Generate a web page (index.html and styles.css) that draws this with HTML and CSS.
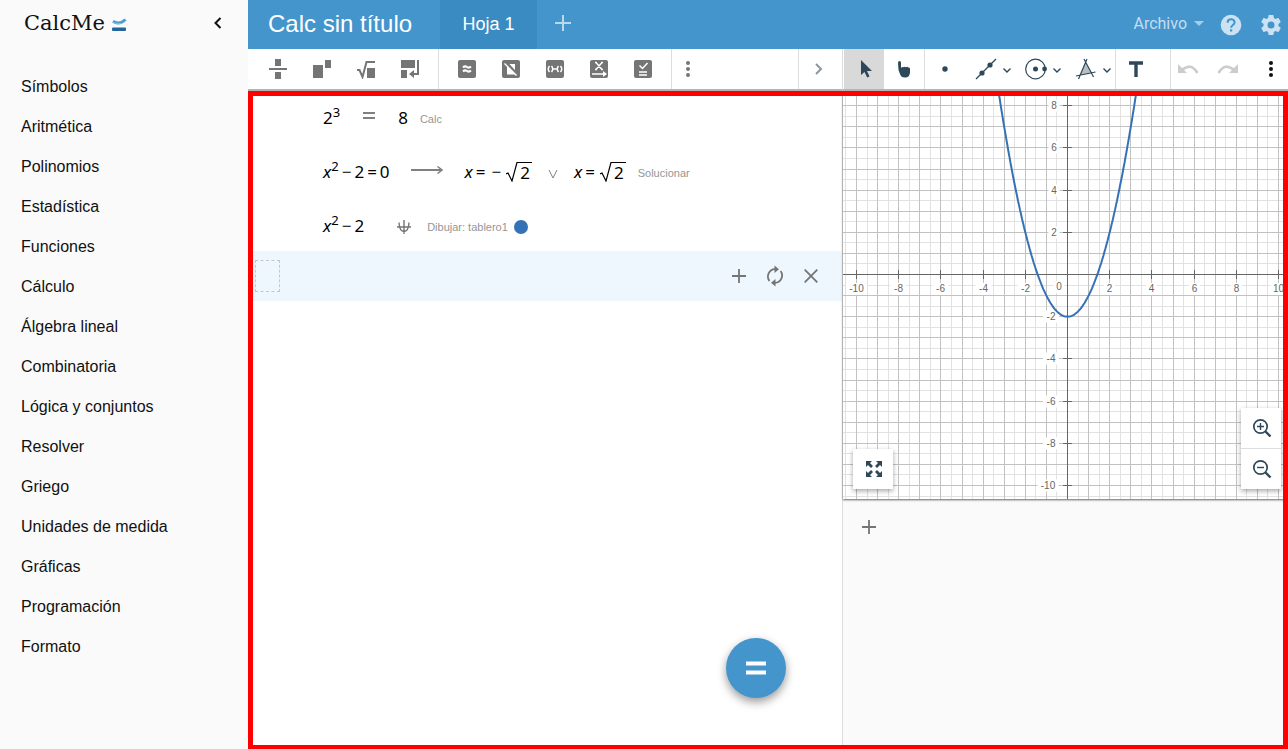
FILE: index.html
```html
<!DOCTYPE html>
<html lang="es">
<head>
<meta charset="utf-8">
<title>CalcMe</title>
<link rel="stylesheet" href="styles.css">
</head>
<body>
<div class="app">
  <aside class="sidebar">
    <div class="brand">
      <span class="brand-name">CalcMe</span>
      <svg class="brand-mark" width="15" height="14" viewBox="0 0 15 14"><path d="M1 3.200Q7 7.500 13.500 1.500" fill="none" stroke="#4a9fd4" stroke-width="3"/><path d="M1 4.500Q5 6.500 9 5.500" fill="none" stroke="#7fc0e4" stroke-width="1"/><rect x="0" y="9.500" width="14" height="3.500" rx="1" fill="#22659c"/></svg>
      <button class="collapse" aria-label="Contraer"><svg width="10" height="12" viewBox="0 0 10 12"><path d="M7.500 1L2.500 6l5 5" fill="none" stroke="#111" stroke-width="2"/></svg></button>
    </div>
    <nav class="menu">
      <a href="#">Símbolos</a><a href="#">Aritmética</a><a href="#">Polinomios</a><a href="#">Estadística</a><a href="#">Funciones</a><a href="#">Cálculo</a><a href="#">Álgebra lineal</a><a href="#">Combinatoria</a><a href="#">Lógica y conjuntos</a><a href="#">Resolver</a><a href="#">Griego</a><a href="#">Unidades de medida</a><a href="#">Gráficas</a><a href="#">Programación</a><a href="#">Formato</a>
    </nav>
  </aside>

  <main class="main">
    <header class="header">
      <h1 class="title">Calc sin título</h1>
      <button class="tab">Hoja 1</button>
      <button class="add-tab" aria-label="Nueva hoja"><svg width="16" height="16" viewBox="0 0 16 16"><path d="M8 0v16M0 8h16" stroke="#b9d9ef" stroke-width="2"/></svg></button>
      <span class="spacer"></span>
      <button class="file-menu">Archivo <span class="caret"></span></button>
      <button class="head-icon" aria-label="Ayuda"><svg width="22" height="22" viewBox="0 0 22 22"><circle cx="11" cy="11" r="10.300" fill="#cbe2f2"/><path d="M7.600 8.700c0-4.600 7-4.300 7-.300 0 2.500-3.500 2.800-3.500 5.400" fill="none" stroke="#4595cd" stroke-width="2"/><rect x="10" y="15.300" width="2.200" height="2.200" fill="#4595cd"/></svg></button>
      <button class="head-icon" aria-label="Ajustes"><svg width="24" height="24" viewBox="0 0 24 24"><path fill="#cbe2f2" d="M19.430 12.980c.04-.32.07-.64.07-.98s-.03-.66-.07-.98l2.110-1.650c.19-.15.24-.42.12-.64l-2-3.460c-.12-.22-.39-.3-.61-.22l-2.490 1c-.52-.4-1.080-.73-1.690-.98l-.38-2.650C14.460 2.180 14.250 2 14 2h-4c-.25 0-.46.18-.49.42l-.38 2.650c-.61.25-1.170.59-1.690.98l-2.490-1c-.23-.09-.49 0-.61.22l-2 3.460c-.13.22-.07.49.12.64l2.110 1.650c-.04.32-.07.65-.07.98s.03.66.07.98l-2.110 1.650c-.19.15-.24.42-.12.64l2 3.460c.12.22.39.3.61.22l2.490-1c.52.4 1.080.73 1.690.98l.38 2.650c.03.24.24.42.49.42h4c.25 0 .46-.18.49-.42l.38-2.650c.61-.25 1.170-.59 1.690-.98l2.490 1c.23.09.49 0 .61-.22l2-3.460c.12-.22.07-.49-.12-.64l-2.110-1.650zM12 15.500a3.500 3.500 0 1 1 0-7 3.500 3.500 0 0 1 0 7z"/></svg></button>
    </header>

    <div class="work">
      <section class="sheet">
        <div class="toolbar">
          <div class="group first">
            <button class="tool" aria-label="Fracción"><svg width="18" height="20" viewBox="0 0 18 20"><path d="M6 0h6v7H6zM0 9h18v2H0zM6 13h6v7H6z" fill="#757575"/></svg></button>
            <button class="tool" aria-label="Potencia"><svg width="20" height="20" viewBox="0 0 20 20"><path d="M1 6h10v13H1zM13 1h6v8h-6z" fill="#757575"/></svg></button>
            <button class="tool" aria-label="Raíz"><svg width="20" height="20" viewBox="0 0 20 20"><path d="M11 9h8v10h-8z" fill="#757575"/><path d="M1 11h2.500l3 7L10.500 3H19" fill="none" stroke="#757575" stroke-width="2"/></svg></button>
            <button class="tool" aria-label="Salto"><svg width="20" height="20" viewBox="0 0 20 20"><path d="M1 1h14v8H1zM1 11h6v8H1z" fill="#757575"/><path d="M18 1v14h-7" fill="none" stroke="#757575" stroke-width="2"/><path d="M9 15l5-4v8z" fill="#757575"/></svg></button>
          </div>
          <div class="group">
            <button class="tool" aria-label="Aproximar"><svg width="18" height="18" viewBox="0 0 18 18"><rect width="18" height="18" rx="2" fill="#757575"/><path d="M5 7.500q2-2 4-.500t4-.500M5 11.500q2-2 4-.500t4-.500" fill="none" stroke="#fff" stroke-width="2"/></svg></button>
            <button class="tool" aria-label="Sin evaluar"><svg width="18" height="18" viewBox="0 0 18 18"><rect width="18" height="18" rx="2" fill="#757575"/><path d="M7 4h6v10.500H5V6z" fill="#fff"/><path d="M4 2.500l11 12" stroke="#757575" stroke-width="3"/><path d="M2.500 3.500l12 12" stroke="#fff" stroke-width="1.500"/></svg></button>
            <button class="tool" aria-label="Factorizar"><svg width="18" height="18" viewBox="0 0 18 18"><rect width="18" height="18" rx="2" fill="#757575"/><path d="M3.500 6Q1 9 3.500 12M5.500 6Q8 9 5.500 12M12.500 6Q10 9 12.500 12M14.500 6Q17 9 14.500 12M7.500 9h3" fill="none" stroke="#fff" stroke-width="1.500"/></svg></button>
            <button class="tool" aria-label="Resolver"><svg width="18" height="18" viewBox="0 0 18 18"><rect width="18" height="18" rx="2" fill="#757575"/><path d="M6 2.500l6 7M12 2.500l-6 7M5 2.500h2M11 2.500h2M5 9.500h2M11 9.500h2M2 14h12" stroke="#fff" stroke-width="1.500"/><path d="M13 11l4 3-4 3z" fill="#fff"/></svg></button>
            <button class="tool" aria-label="Comprobar"><svg width="18" height="18" viewBox="0 0 18 18"><rect width="18" height="18" rx="2" fill="#757575"/><path d="M5.500 5.500l3 3L13.500 3M5 12h8M5 15h8" fill="none" stroke="#fff" stroke-width="1.500"/></svg></button>
          </div>
          <button class="tool narrow" aria-label="Más"><svg width="6" height="18" viewBox="0 0 6 18"><g fill="#757575"><circle cx="3" cy="3" r="2"/><circle cx="3" cy="9" r="2"/><circle cx="3" cy="15" r="2"/></g></svg></button>
          <span class="spacer"></span>
          <button class="tool next" aria-label="Siguiente"><svg width="10" height="14" viewBox="0 0 10 14"><path d="M2 2l5 5-5 5" fill="none" stroke="#8d979e" stroke-width="2"/></svg></button>
        </div>

        <div class="lines">
          <div class="line">
            <span class="math">2<sup>3</sup></span>
            <svg class="op-eq" width="12" height="8" viewBox="0 0 12 8"><path d="M0 1h12M0 6h12" stroke="#808080" stroke-width="2"/></svg>
            <span class="math">8</span>
            <span class="note">Calc</span>
          </div>
          <div class="line">
            <span class="math"><i>x</i><sup>2</sup><span class="bin">−</span>2<span class="bin">=</span>0</span>
            <svg class="arrow" width="32" height="8" viewBox="0 0 32 8"><path d="M0 4h31" stroke="#808080" stroke-width="2"/><path d="M26.500 .500L31 4l-4.500 3.500" fill="none" stroke="#808080" stroke-width="1.500"/></svg>
            <span class="math"><i>x</i><span class="bin">=</span><span class="bin">−</span><svg class="root" width="12" height="20" viewBox="0 0 12 20"><path d="M0 12l2-1 4 8L11 .500h1" fill="none" stroke="#000" stroke-width="1.200"/></svg><span class="radicand">2</span></span>
            <svg class="or" width="10" height="10" viewBox="0 0 10 10"><path d="M1 1l4 8 4-8" fill="none" stroke="#808080"/></svg>
            <span class="math"><i>x</i><span class="bin">=</span><svg class="root" width="12" height="20" viewBox="0 0 12 20"><path d="M0 12l2-1 4 8L11 .500h1" fill="none" stroke="#000" stroke-width="1.200"/></svg><span class="radicand">2</span></span>
            <span class="note">Solucionar</span>
          </div>
          <div class="line">
            <span class="math"><i>x</i><sup>2</sup><span class="bin">−</span>2</span>
            <svg class="plot-op" width="16" height="16" viewBox="0 0 16 16"><path d="M1 8h14M8 1v14M3 3.500Q3.500 12.500 8 12.500T13 3.500" fill="none" stroke="#757575" stroke-width="1.400"/></svg>
            <span class="note">Dibujar: tablero1</span>
            <span class="swatch"></span>
          </div>
          <div class="active-line">
            <input class="cell" aria-label="Expresión">
            <span class="spacer"></span>
            <button class="action" aria-label="Añadir"><svg width="14" height="14" viewBox="0 0 14 14"><path d="M7 0v14M0 7h14" stroke="#757575" stroke-width="1.800"/></svg></button>
            <button class="action" aria-label="Recalcular"><svg width="20" height="22" viewBox="0 0 20 22"><path d="M4.500 16A7.300 7.300 0 0 1 10 4.200M15.500 6A7.300 7.300 0 0 1 10 17.800" fill="none" stroke="#757575" stroke-width="1.800"/><path d="M9.500 .500l4.500 3.700-4.500 3.700zM10.500 14.100L6 17.800l4.500 3.700z" fill="#757575"/></svg></button>
            <button class="action" aria-label="Cerrar"><svg width="14" height="14" viewBox="0 0 14 14"><path d="M.700.700l12.600 12.600M13.300.700L.700 13.300" stroke="#757575" stroke-width="1.800"/></svg></button>
          </div>
        </div>
        <button class="evaluate" aria-label="Calcular"><svg width="20" height="14" viewBox="0 0 20 14"><path d="M0 2.500h20M0 11.500h20" stroke="#fff" stroke-width="4"/></svg></button>
      </section>

      <section class="board">
        <div class="toolbar">
          <div class="group pick">
            <button class="tool selected" aria-label="Seleccionar"><svg width="14" height="20" viewBox="0 0 14 20"><path d="M2 1v15l3.500-3 2.700 5.500 2.300-1-2.500-5.500H13z" fill="#2d4858"/></svg></button>
            <button class="tool" aria-label="Mover"><svg width="14" height="18" viewBox="0 0 14 18"><path d="M1 3Q1 1 2.500 1T4 3v5q1-1.500 2.500-.700 1.200-1.300 2.500 0 1.500-1 2.300.300Q13 7 13 9v3q0 5.500-5 5.500-4 0-5-3.500L1.500 10z" fill="#2d4858"/></svg></button>
          </div>
          <div class="group shapes">
            <button class="tool" aria-label="Punto"><svg width="6" height="6"><circle cx="3" cy="3" r="2.700" fill="#2d4858"/></svg></button>
            <button class="tool wide" aria-label="Recta"><svg width="22" height="22" viewBox="0 0 22 22"><path d="M1 21L21 1" stroke="#2d4858" stroke-width="1.200"/><circle cx="7" cy="15" r="2.600" fill="#2d4858"/><circle cx="15" cy="7" r="2.600" fill="#2d4858"/></svg><svg class="drop" width="8" height="5" viewBox="0 0 8 5"><path d="M.500.500L4 4 7.500.500" fill="none" stroke="#2d4858" stroke-width="1.400"/></svg></button>
            <button class="tool wide" aria-label="Circunferencia"><svg width="22" height="22" viewBox="0 0 22 22"><circle cx="10.500" cy="11" r="9.800" fill="none" stroke="#2d4858" stroke-width="1.200"/><circle cx="10.500" cy="11" r="2.500" fill="#2d4858"/><circle cx="19.600" cy="11" r="2.400" fill="#2d4858"/></svg><svg class="drop" width="8" height="5" viewBox="0 0 8 5"><path d="M.500.500L4 4 7.500.500" fill="none" stroke="#2d4858" stroke-width="1.400"/></svg></button>
            <button class="tool wide" aria-label="Polígono"><svg width="22" height="22" viewBox="0 0 22 22"><path d="M10.500 4L5 17l12-2z" fill="#b7bfc4"/><path d="M12 1L3.500 21M9 1l9.500 18M1 18l19.500-4" fill="none" stroke="#2d4858" stroke-width="1.200"/></svg><svg class="drop" width="8" height="5" viewBox="0 0 8 5"><path d="M.500.500L4 4 7.500.500" fill="none" stroke="#2d4858" stroke-width="1.400"/></svg></button>
          </div>
          <button class="tool" aria-label="Texto"><svg width="14" height="16" viewBox="0 0 14 16"><path d="M0 2h14M7 2v14" stroke="#2d4858" stroke-width="3.400"/></svg></button>
          <span class="spacer"></span>
          <div class="history">
            <button aria-label="Deshacer"><svg width="24" height="20" viewBox="0 0 24 20"><path d="M2 5v9h9z" fill="#ccc"/><path d="M6 11Q15 3 21.500 14" fill="none" stroke="#ccc" stroke-width="2.500"/></svg></button>
            <button aria-label="Rehacer"><svg width="24" height="20" viewBox="0 0 24 20"><path d="M22 5v9h-9z" fill="#ccc"/><path d="M18 11Q9 3 2.500 14" fill="none" stroke="#ccc" stroke-width="2.500"/></svg></button>
            <button class="more" aria-label="Más opciones"><svg width="6" height="18" viewBox="0 0 6 18"><g fill="#111"><circle cx="3" cy="3" r="2"/><circle cx="3" cy="9" r="2"/><circle cx="3" cy="15" r="2"/></g></svg></button>
          </div>
        </div>
        <div class="plot">
          <svg id="graph" class="graph"></svg>
          <button class="float expand" aria-label="Ampliar"><svg width="16" height="16" viewBox="0 0 16 16"><path d="M0 0h6L4 2l3 3-2 2-3-3-2 2zM16 0v6l-2-2-3 3-2-2 3-3-2-2zM0 16v-6l2 2 3-3 2 2-3 3 2 2zM16 16h-6l2-2-3-3 2-2 3 3 2-2z" fill="#2d4858"/></svg></button>
          <div class="zoom">
            <button class="float" aria-label="Acercar"><svg width="20" height="20" viewBox="0 0 20 20"><circle cx="8.500" cy="8.500" r="6.700" fill="none" stroke="#2d4858" stroke-width="1.700"/><path d="M5 8.500h7M8.500 5v7" stroke="#2d4858" stroke-width="1.400"/><path d="M13.500 13.500l5 5" stroke="#2d4858" stroke-width="2.400"/></svg></button>
            <button class="float" aria-label="Alejar"><svg width="20" height="20" viewBox="0 0 20 20"><circle cx="8.500" cy="8.500" r="6.700" fill="none" stroke="#2d4858" stroke-width="1.700"/><path d="M5 8.500h7" stroke="#2d4858" stroke-width="1.400"/><path d="M13.500 13.500l5 5" stroke="#2d4858" stroke-width="2.400"/></svg></button>
          </div>
        </div>
        <div class="objects">
          <button class="action" aria-label="Añadir objeto"><svg width="14" height="14" viewBox="0 0 14 14"><path d="M7 0v14M0 7h14" stroke="#757575" stroke-width="1.800"/></svg></button>
        </div>
      </section>
      <div class="highlight"></div>
    </div>
  </main>
</div>
<script src="graph.js"></script>
</body>
</html>
```
FILE: styles.css
```css
* { box-sizing: border-box; }
body { margin: 0; font-family: "Liberation Sans", Arial, sans-serif; color: #111; }
button { border: 0; padding: 0; margin: 0; background: none; font: inherit; color: inherit; display: flex; align-items: center; justify-content: center; flex: none; }
svg { display: block; flex: none; }
.app { display: flex; height: 100vh; overflow: hidden; }
.spacer { flex: 1; }

.sidebar { width: 248px; flex: none; background: #fafafa; }
.brand { display: flex; align-items: center; height: 46px; padding: 0 23px 0 24px; }
.brand-name { font: 21px "DejaVu Serif", serif; color: #111; }
.brand-mark { margin: 4px 0 0 7px; }
.collapse { margin-left: auto; width: 14px; height: 24px; }
.menu { display: flex; flex-direction: column; padding-top: 21px; }
.menu a { padding-left: 21px; font-size: 16px; line-height: 40px; color: #111; text-decoration: none; }

.main { flex: 1; min-width: 0; display: flex; flex-direction: column; }
.header { display: flex; align-items: center; height: 49px; flex: none; background: #4595cd; color: #fff; padding-right: 6px; }
.title { margin: 0; padding: 0 28px 2px 20px; font-size: 24px; font-weight: 400; white-space: nowrap; }
.tab { align-self: stretch; width: 97px; background: #3b8bc3; font-size: 18px; }
.add-tab { width: 52px; height: 46px; align-self: flex-start; }
.file-menu { font: 16px Roboto, sans-serif; color: #c3def0; gap: 7px; margin: 0 16px 2px 0; }
.caret { border: 5px solid transparent; border-top-color: #a6cde8; border-bottom: 0; }
.head-icon { width: 22px; margin-right: 18px; }
.head-icon:last-child { margin-right: 0; }

.work { flex: 1; min-height: 0; position: relative; display: grid; grid-template-columns: 4fr 3fr; }
.sheet, .board { min-width: 0; display: flex; flex-direction: column; position: relative; }
.board { border-left: 1px solid #ddd; background: #fafafa; }
.toolbar { height: 40px; flex: none; display: flex; align-items: stretch; background: #fff; box-shadow: 0 2px 0 #b4b4b4; position: relative; z-index: 1; }
.group { display: flex; border-right: 1px solid #ddd; padding: 0 6px; }
.group.first { padding-left: 8px; }
.tool { width: 44px; }
.tool.narrow { width: 32px; }
.tool.next { border-left: 1px solid #ddd; padding-right: 3px; }
.board .group { padding: 0; }
.board .group.pick { padding-left: 1px; }
.board .tool { width: 40px; }
.board .tool.wide { width: 50px; justify-content: flex-start; padding-left: 10px; gap: 6px; }
.drop { margin-top: 3px; }
.board .tool.selected { background: #d9d9d9; padding-left: 3px; }
.history { display: flex; align-items: center; gap: 16px; border-left: 1px solid #ddd; padding: 0 5px; }
.history button { width: 24px; }
.history .more { margin-left: 3px; }

.sheet { background: #fff; }
.line { display: flex; align-items: center; height: 54px; padding: 4px 0 0 75px; }
.math { display: inline-flex; align-items: center; font: 17px/20px "Noto Sans", sans-serif; color: #000; }
.math sup { font-size: 13px; line-height: 13px; vertical-align: baseline; margin: 0 0 12px; }
.bin { margin: 0 3px; }
.note { font-size: 11px; color: #969696; margin: 2px 0 0 12px; white-space: nowrap; }
.op-eq { margin: 0 23px 4px; }
.arrow { margin: 0 22px 4px 21px; }
.root { margin-left: 2px; }
.radicand { border-top: 1px solid #000; padding: 0 2px; }
.or { margin: 4px 16px 0; }
.plot-op { margin: 2px 3px 0 32px; }
.swatch { width: 14px; height: 14px; border-radius: 50%; background: #3572b5; margin: 2px 0 0 6px; }
.active-line { display: flex; align-items: center; height: 50px; background: #eef6fe; padding: 0 13px 0 7px; }
.cell { width: 25px; height: 32px; border: 1px dashed #c4c8cc; background: none; padding: 0; }
.action { width: 36px; height: 36px; }
.evaluate { position: absolute; right: 56px; bottom: 51px; width: 60px; height: 60px; border-radius: 50%; background: #4595cd; box-shadow: 0 4px 10px rgba(0, 0, 0, .4); }

.plot { flex: 41; min-height: 0; position: relative; background: #fff; box-shadow: 0 1px 2px rgba(0, 0, 0, .6); }
.graph { width: 100%; height: 100%; }
.graph text { font: 10px "Liberation Sans", Arial, sans-serif; fill: #666; }
.minor { stroke: #e2e2e2; }
.major { stroke: #c2c2c2; }
.axis { stroke: #666; }
.mask { fill: #fff; }
.curve { fill: none; stroke: #3572b5; stroke-width: 2; }
.float { width: 40px; height: 40px; background: #fff; padding-left: 1px; }
.expand, .zoom { position: absolute; bottom: 10px; box-shadow: 0 2px 5px rgba(0, 0, 0, .35); }
.expand { left: 10px; }
.zoom { right: 7px; display: grid; gap: 1px; background: #ddd; }
.objects { flex: 25; min-height: 0; }
.objects .action { margin: 10px 8px; }
.highlight { position: absolute; inset: 42px 0 0; border: 5px solid #f00; border-bottom-width: 4px; pointer-events: none; z-index: 2; }
```
FILE: graph.js
```js
const svg = document.getElementById("graph");
const UNIT = 21.1;

function add(name, attrs, text) {
  const el = document.createElementNS("http://www.w3.org/2000/svg", name);
  for (const key in attrs) el.setAttribute(key, attrs[key]);
  if (text !== undefined) el.textContent = text;
  svg.appendChild(el);
}

function segment(x1, y1, x2, y2, cls) {
  add("line", { x1, y1, x2, y2, class: cls });
}

function label(text, x, y) {
  const width = text.length * 5 + 6;
  add("rect", { x: x - width / 2, y: y - 6, width, height: 12, class: "mask" });
  add("text", { x, y: y + 3, "text-anchor": "middle" }, text);
}

function draw() {
  svg.replaceChildren();
  const w = svg.clientWidth, h = svg.clientHeight;
  const ox = Math.round(w / 2) + 1, oy = Math.round(h * 0.45);
  const px = v => Math.round(ox + v * UNIT) + 0.5;
  const py = v => Math.round(oy - v * UNIT) + 0.5;
  const nx = Math.ceil(w / UNIT), ny = Math.ceil(h / UNIT);

  for (const [cls, shift] of [["minor", 0.5], ["major", 0]]) {
    for (let i = -nx; i <= nx; i++) segment(px(i + shift), 0, px(i + shift), h, cls);
    for (let i = -ny; i <= ny; i++) segment(0, py(i + shift), w, py(i + shift), cls);
  }
  for (let i = -10; i <= 10; i += 2) {
    if (i === 0) continue;
    label(String(i), px(i), oy + 15);
    if (i < 10) label(String(i), ox - 10 - String(i).length * 3, py(i));
  }
  label("0", ox - 8, oy + 13);
  segment(0, py(0), w, py(0), "axis");
  segment(px(0), 0, px(0), h, "axis");
  for (let i = -10; i <= 10; i += 2) {
    segment(px(i), oy - 4, px(i), oy + 5, "axis");
    segment(ox - 4, py(i), ox + 5, py(i), "axis");
  }
  const points = [];
  for (let x = -3.5; x <= 3.5; x += 0.05) {
    points.push((ox + 0.5 + x * UNIT).toFixed(1) + "," + (oy + 0.5 - (x * x - 2) * UNIT).toFixed(1));
  }
  add("polyline", { points: points.join(" "), class: "curve" });
}

draw();
window.addEventListener("resize", draw);
```
